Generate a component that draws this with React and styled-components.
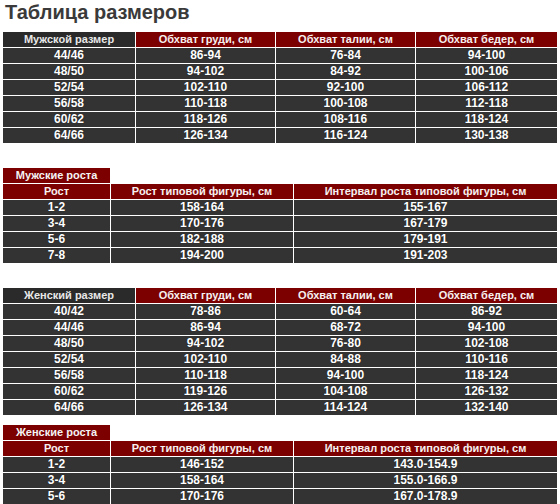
import React from 'react';
import styled, { createGlobalStyle } from 'styled-components';

const GlobalStyle = createGlobalStyle`
  body {
    margin: 0;
    background: #ffffff;
    font-family: 'Liberation Sans', Arial, sans-serif;
  }
`;

const Page = styled.div`
  padding: 0 0 0 2px;
  width: 556px;
`;

const Title = styled.h1`
  margin: 0 0 0 3px;
  height: 31px;
  font-size: 20px;
  line-height: 24px;
  font-weight: bold;
  color: #3a3a3a;
`;

const Section = styled.div`
  margin-top: ${props => props.$gap}px;
`;

const Caption = styled.div`
  margin-left: 1px;
  width: ${props => props.$width}px;
  height: 15px;
  line-height: 15px;
  background: #7d0000;
  color: #f4f4f4;
  font-size: 11px;
  font-weight: bold;
  text-align: center;
`;

const Table = styled.table`
  border-collapse: separate;
  border-spacing: 1px;
  table-layout: fixed;
  width: 556px;
  background: #ffffff;
`;

const HeadCell = styled.th`
  height: 15px;
  padding: 0;
  line-height: 15px;
  font-size: 11px;
  font-weight: bold;
  text-align: center;
  white-space: nowrap;
  color: ${props => (props.$tone === 'dark' ? '#e8e8e8' : '#f6f0f0')};
  background: ${props => (props.$tone === 'dark' ? '#2a2a2a' : '#7d0000')};
`;

const Cell = styled.td`
  height: 15px;
  padding: 0;
  line-height: 15px;
  font-size: 12px;
  font-weight: bold;
  text-align: center;
  color: #ffffff;
  background: #333333;
  text-shadow: 0 0 1px rgba(0, 0, 0, 0.6);
`;

const sizeCols = [132, 139, 139, 141];
const heightCols = [107, 182, 263];

const menSizes = {
  head: ['Мужской размер', 'Обхват груди, см', 'Обхват талии, см', 'Обхват бедер, см'],
  rows: [
    ['44/46', '86-94', '76-84', '94-100'],
    ['48/50', '94-102', '84-92', '100-106'],
    ['52/54', '102-110', '92-100', '106-112'],
    ['56/58', '110-118', '100-108', '112-118'],
    ['60/62', '118-126', '108-116', '118-124'],
    ['64/66', '126-134', '116-124', '130-138'],
  ],
};

const menHeights = {
  caption: 'Мужские роста',
  head: ['Рост', 'Рост типовой фигуры, см', 'Интервал роста типовой фигуры, см'],
  rows: [
    ['1-2', '158-164', '155-167'],
    ['3-4', '170-176', '167-179'],
    ['5-6', '182-188', '179-191'],
    ['7-8', '194-200', '191-203'],
  ],
};

const womenSizes = {
  head: ['Женский размер', 'Обхват груди, см', 'Обхват талии, см', 'Обхват бедер, см'],
  rows: [
    ['40/42', '78-86', '60-64', '86-92'],
    ['44/46', '86-94', '68-72', '94-100'],
    ['48/50', '94-102', '76-80', '102-108'],
    ['52/54', '102-110', '84-88', '110-116'],
    ['56/58', '110-118', '94-100', '118-124'],
    ['60/62', '119-126', '104-108', '126-132'],
    ['64/66', '126-134', '114-124', '132-140'],
  ],
};

const womenHeights = {
  caption: 'Женские роста',
  head: ['Рост', 'Рост типовой фигуры, см', 'Интервал роста типовой фигуры, см'],
  rows: [
    ['1-2', '146-152', '143.0-154.9'],
    ['3-4', '158-164', '155.0-166.9'],
    ['5-6', '170-176', '167.0-178.9'],
  ],
};

// captioned tables have an all-red header, size tables start with a dark cell
const SizeTable = ({ data, cols, gap }) => (
  <Section $gap={gap}>
    {data.caption && <Caption $width={cols[0]}>{data.caption}</Caption>}
    <Table>
      <colgroup>
        {cols.map((w, i) => (
          <col key={i} style={{ width: w }} />
        ))}
      </colgroup>
      <thead>
        <tr>
          {data.head.map((h, i) => (
            <HeadCell key={i} $tone={i === 0 && !data.caption ? 'dark' : 'red'}>
              {h}
            </HeadCell>
          ))}
        </tr>
      </thead>
      <tbody>
        {data.rows.map((row, r) => (
          <tr key={r}>
            {row.map((v, c) => (
              <Cell key={c}>{v}</Cell>
            ))}
          </tr>
        ))}
      </tbody>
    </Table>
  </Section>
);

const App = () => (
  <>
    <GlobalStyle />
    <Page>
      <Title>Таблица размеров</Title>
      <SizeTable data={menSizes} cols={sizeCols} gap={0} />
      <SizeTable data={menHeights} cols={heightCols} gap={24} />
      <SizeTable data={womenSizes} cols={sizeCols} gap={23} />
      <SizeTable data={womenHeights} cols={heightCols} gap={9} />
    </Page>
  </>
);

export default App;
